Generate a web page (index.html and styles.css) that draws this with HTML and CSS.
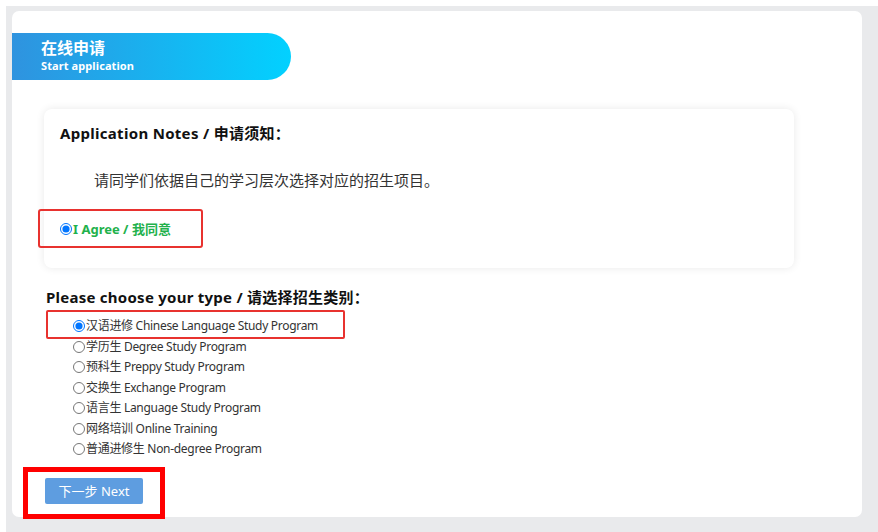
FILE: index.html
```html
<!DOCTYPE html>
<html lang="zh-CN">
<head>
    <meta charset="UTF-8">
    <title>在线申请</title>
    <link rel="stylesheet" href="styles.css">
</head>
<body>
    <div class="frame">
        <div class="panel">
            <div class="banner">
                <div class="banner-title">在线申请</div>
                <div class="banner-sub">Start application</div>
            </div>

            <div class="notes">
                <h3 class="notes-title">Application Notes / 申请须知：</h3>
                <p class="notes-text">请同学们依据自己的学习层次选择对应的招生项目。</p>
                <label class="agree">
                    <input type="radio" name="agree" checked>I Agree / 我同意
                </label>
            </div>

            <h3 class="type-title">Please choose your type / 请选择招生类别：</h3>
            <div class="type-list">
                <label class="type-item marked">
                    <input type="radio" name="type" checked>汉语进修 Chinese Language Study Program
                    <span class="mark mark-type"></span>
                </label>
                <label class="type-item"><input type="radio" name="type">学历生 Degree Study Program</label>
                <label class="type-item"><input type="radio" name="type">预科生 Preppy Study Program</label>
                <label class="type-item"><input type="radio" name="type">交换生 Exchange Program</label>
                <label class="type-item"><input type="radio" name="type">语言生 Language Study Program</label>
                <label class="type-item"><input type="radio" name="type">网络培训 Online Training</label>
                <label class="type-item"><input type="radio" name="type">普通进修生 Non-degree Program</label>
            </div>

            <div class="actions">
                <button class="next-btn">下一步 Next</button>
                <span class="mark mark-next"></span>
            </div>
        </div>
    </div>
</body>
</html>
```

FILE: styles.css
```css
* {
    margin: 0;
    padding: 0;
    box-sizing: border-box;
    font-family: "Noto Sans", "Noto Sans CJK SC", sans-serif;
}

html, body {
    height: 100%;
    background: #ffffff;
}

body {
    overflow: hidden;
    color: #333333;
}

.frame {
    margin: 6px 0 0 6px;
    height: calc(100% - 6px);
    background: #e9eaec;
    padding: 5px 16px 0 6px;
}

.panel {
    height: 506px;
    background: #ffffff;
    border-radius: 7px;
    padding-top: 22px;
}

/* header ribbon */
.banner {
    width: 279px;
    height: 47px;
    border-radius: 0 24px 24px 0;
    background: linear-gradient(90deg, #2f93df, #02d1ff);
    color: #ffffff;
    padding: 5px 0 0 29px;
}

.banner-title {
    font-size: 16px;
    font-weight: 700;
    line-height: 20px;
}

.banner-sub {
    font-size: 11px;
    font-weight: 700;
    line-height: 14px;
    margin-top: 1px;
    letter-spacing: 0.1px;
}

/* notes card */
.notes {
    width: 750px;
    height: 159px;
    margin: 29px 0 0 32px;
    padding: 14px 16px 0;
    border-radius: 8px;
    background: #ffffff;
    box-shadow: 0 0 8px rgba(0, 0, 0, 0.09);
}

.notes-title {
    font-size: 15px;
    font-weight: 700;
    line-height: 20px;
    color: #111111;
    letter-spacing: 0.3px;
}

.notes-text {
    font-size: 15px;
    line-height: 20px;
    margin: 27px 0 0 34px;
}

.agree {
    display: flex;
    align-items: center;
    width: 165px;
    height: 39px;
    margin: 19px 0 0 -22px;
    padding-left: 20px;
    border: 2px solid #e8322f;
    border-radius: 3px;
    color: #22b14c;
    font-size: 13px;
    font-weight: 700;
}

input[type="radio"] {
    width: 12px;
    height: 12px;
    margin: 0 1px 0 0;
    vertical-align: -2px;
}

/* type list */
.type-title {
    font-size: 15px;
    font-weight: 700;
    line-height: 20px;
    color: #111111;
    margin: 19px 0 0 34px;
    letter-spacing: 0.25px;
}

.type-list {
    margin: 9px 0 0 61px;
}

.type-item {
    display: block;
    font-size: 12px;
    line-height: 20.5px;
    color: #333333;
    letter-spacing: -0.3px;
}

.marked {
    position: relative;
}

.mark {
    position: absolute;
    pointer-events: none;
}

.mark-type {
    left: -27px;
    top: -6px;
    width: 299px;
    height: 29px;
    border: 2px solid #e8322f;
    border-radius: 2px;
}

.actions {
    position: relative;
    width: 98px;
    margin: 18px 0 0 33px;
}

.next-btn {
    display: block;
    width: 98px;
    height: 26px;
    border: none;
    border-radius: 2px;
    background: #5e9de0;
    color: #ffffff;
    font-size: 13px;
}

.mark-next {
    left: -22px;
    top: -11px;
    width: 142px;
    height: 52px;
    border: 5px solid #ff0000;
}
```
